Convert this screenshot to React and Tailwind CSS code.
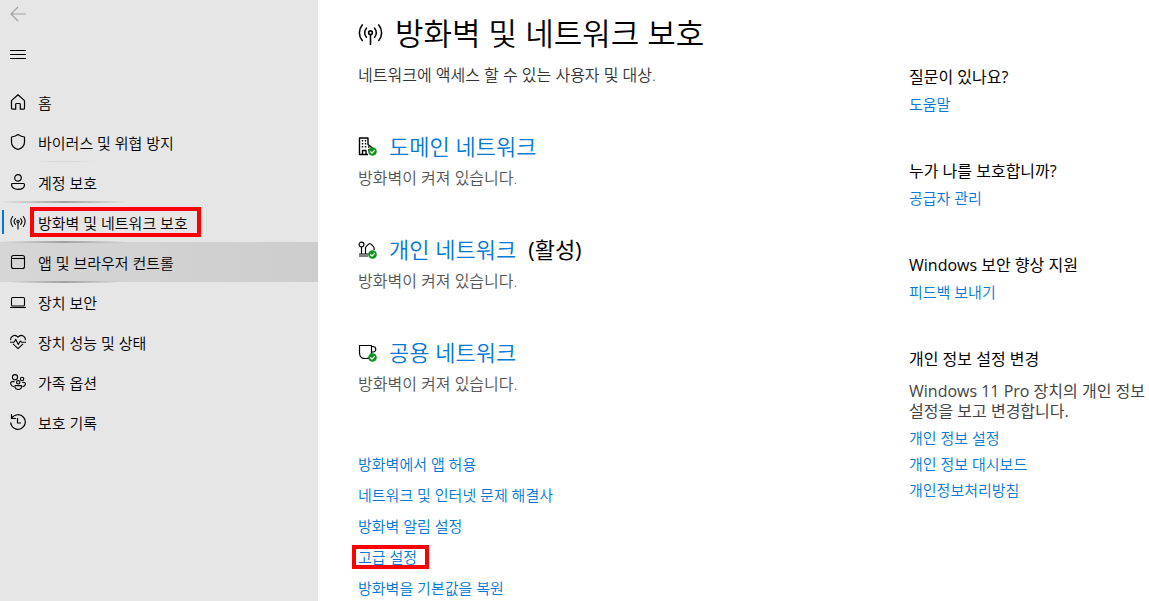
import clsx from "clsx";

function Glyph({ className = "size-4", children, ...props }) {
  return (
    <svg
      viewBox="0 0 16 16"
      fill="none"
      stroke="currentColor"
      strokeLinejoin="round"
      className={clsx("shrink-0", className)}
      aria-hidden="true"
      {...props}
    >
      {children}
    </svg>
  );
}

function BackIcon() {
  return (
    <Glyph strokeWidth="1.2">
      <path d="M16 8H1M8 1 1 8l7 7" />
    </Glyph>
  );
}

function MenuIcon() {
  return (
    <Glyph>
      <path d="M0 4.5h16M0 8.5h16M0 12.5h16" />
    </Glyph>
  );
}

function HomeIcon() {
  return (
    <Glyph strokeWidth="1.2">
      <path d="M1.5 6.6 8 .8l6.5 5.8v7.6a1 1 0 0 1-1 1h-3.2v-4.9a.8.8 0 0 0-.8-.8h-3a.8.8 0 0 0-.8.8v4.9H2.5a1 1 0 0 1-1-1z" />
    </Glyph>
  );
}

function ShieldIcon() {
  return (
    <Glyph strokeWidth="1.2">
      <path d="M8 .6C6 2 4 2.9 1.5 3v5c0 4 2.6 6.2 6.5 7.5 3.9-1.3 6.5-3.5 6.5-7.5V3C12 2.9 10 2 8 .6z" />
    </Glyph>
  );
}

function AccountIcon() {
  return (
    <Glyph strokeWidth="1.2">
      <circle cx="8" cy="3.9" r="3.3" />
      <path d="M2.5 9.5h11a1 1 0 0 1 1 1c0 3-2.5 4.9-6.5 4.9s-6.5-1.9-6.5-4.9a1 1 0 0 1 1-1z" />
    </Glyph>
  );
}

function AntennaIcon({ className, strokeWidth = 1.1 }) {
  return (
    <Glyph className={className} strokeWidth={strokeWidth} strokeLinecap="round">
      <circle cx="8" cy="7.5" r="1.2" />
      <path d="M8 8.7V15M5.4 4.6a4.3 4.3 0 0 0 0 5.8M10.6 4.6a4.3 4.3 0 0 1 0 5.8M2.7 2.5a7.8 7.8 0 0 0 0 10M13.3 2.5a7.8 7.8 0 0 1 0 10" />
    </Glyph>
  );
}

function WindowIcon() {
  return (
    <Glyph strokeWidth="1.1">
      <rect x="1.5" y="1.5" width="13" height="13" rx="2" />
      <path d="M1.5 4.5h13" />
    </Glyph>
  );
}

function LaptopIcon() {
  return (
    <Glyph strokeWidth="1.1">
      <rect x="1.5" y="3.5" width="13" height="8.5" rx="1.3" />
      <path d="M0 13.5h16" />
    </Glyph>
  );
}

function HeartIcon() {
  return (
    <Glyph strokeWidth="1.1">
      <path d="M.8 6.2C-.2 2.5 4.8-.6 8 3.2c3.2-3.8 8.2-.7 7.2 3M3 9.8l5 4.9 5-4.9" />
      <path d="M0 8.2h4l1.8-2.8 2.5 5.1 2-3.5 1.2 1.2H16" />
    </Glyph>
  );
}

function FamilyIcon() {
  return (
    <Glyph strokeWidth="1.1">
      <circle cx="5" cy="3.2" r="2.6" />
      <circle cx="12.1" cy="5" r="1.7" />
      <circle cx="8.2" cy="8.3" r="1.7" />
      <path d="M4.5 7.6H2c-2.2.3-1.7 4.9 2 5.2M12.2 8.5h2.3c1.6.8.9 3.8-1.8 4.2M5.3 11.6h6c.9 0 .7 3.9-3 3.9s-3.9-3.9-3-3.9z" />
    </Glyph>
  );
}

function HistoryIcon() {
  return (
    <Glyph strokeWidth="1.2">
      <path d="M1.5 0v4.5H6M1.7 4.3A7.3 7.3 0 1 1 .7 8.5M7.5 4v5H11" />
    </Glyph>
  );
}

function CheckBadge() {
  return (
    <>
      <circle cx="14.5" cy="14.5" r="4.3" fill="#10931e" stroke="none" />
      <path d="m12.3 14.5 1.7 1.6 2.8-3" stroke="#fff" strokeWidth="1.3" />
    </>
  );
}

function DomainIcon() {
  return (
    <Glyph className="size-[19px]" viewBox="0 0 19 19" strokeWidth="1.4">
      <path d="M10 17.5H1.5V1H10v6.5l4.5 3.5v3M4.5 17v-3.5H8V17" />
      <path d="M3.8 3.8h1.4M6.8 3.8h1.4M3.8 6.8h1.4M6.8 6.8h1.4M3.8 9.8h1.4M6.8 9.8h1.4M10 10h1.5M10 13h1.5" />
      <CheckBadge />
    </Glyph>
  );
}

function PrivateIcon() {
  return (
    <Glyph className="size-[19px]" viewBox="0 0 19 19" strokeWidth="1.2">
      <circle cx="3.5" cy="4.5" r="2.4" />
      <path d="M3.5 7v7M1 14h10M1 16h9M7.5 14V7.8c0-.6 3.3-4.3 4.3-4.3s4.3 3.7 4.3 4.3V10" />
      <CheckBadge />
    </Glyph>
  );
}

function PublicIcon() {
  return (
    <Glyph className="size-[19px]" viewBox="0 0 19 19" strokeWidth="1.2">
      <path d="M1.5 2.5h12v7c0 4-2 6-5 6h-2c-3 0-5-2-5-6zM13.5 3.5h1.3c4 0 3.8 5.500.3 5.500h-1.600" />
      <CheckBadge />
    </Glyph>
  );
}

const NAV_ITEMS = [
  { label: "홈", icon: HomeIcon },
  { label: "바이러스 및 위협 방지", icon: ShieldIcon },
  { label: "계정 보호", icon: AccountIcon, edge: "left-8 w-16 h-px via-neutral-300" },
  {
    label: "방화벽 및 네트워크 보호",
    icon: AntennaIcon,
    edge: "left-0 w-32 h-0.5 via-neutral-400",
    active: true,
  },
  {
    label: "앱 및 브라우저 컨트롤",
    icon: WindowIcon,
    edge: "left-0 w-32 h-0.5 via-neutral-400",
    hovered: true,
  },
  { label: "장치 보안", icon: LaptopIcon, edge: "left-2 w-28 h-0.5 via-neutral-400" },
  { label: "장치 성능 및 상태", icon: HeartIcon },
  { label: "가족 옵션", icon: FamilyIcon },
  { label: "보호 기록", icon: HistoryIcon },
];

const NETWORKS = [
  { name: "도메인 네트워크", icon: DomainIcon },
  { name: "개인 네트워크", icon: PrivateIcon, note: "(활성)" },
  { name: "공용 네트워크", icon: PublicIcon },
];

const ACTIONS = [
  { label: "방화벽에서 앱 허용" },
  { label: "네트워크 및 인터넷 문제 해결사" },
  { label: "방화벽 알림 설정" },
  { label: "고급 설정", marked: true },
  { label: "방화벽을 기본값을 복원" },
];

const HELP = [
  { title: "질문이 있나요?", links: ["도움말"] },
  { title: "누가 나를 보호합니까?", links: ["공급자 관리"] },
  { title: "Windows 보안 향상 지원", links: ["피드백 보내기"] },
  {
    title: "개인 정보 설정 변경",
    body: "Windows 11 Pro 장치의 개인 정보 설정을 보고 변경합니다.",
    links: ["개인 정보 설정", "개인 정보 대시보드", "개인정보처리방침"],
  },
];

function Marker({ className }) {
  return (
    <span
      className={clsx("pointer-events-none absolute border-4 border-[#ff0000]", className)}
      aria-hidden="true"
    />
  );
}

function NavItem({ label, icon: Icon, edge, active, hovered }) {
  return (
    <li>
      <a
        href="#"
        aria-current={active ? "page" : undefined}
        className={clsx(
          "relative flex h-10 items-center gap-3 pl-2.5",
          hovered && "bg-linear-to-r from-[#d6d6d6] to-[#cdcdcd]"
        )}
      >
        {edge && (
          <span
            className={clsx(
              "absolute -top-px bg-linear-to-r from-transparent to-transparent",
              edge
            )}
          />
        )}
        {active && <span className="absolute left-0.5 h-6 w-0.5 bg-[#0078d7]" />}
        <Icon />
        <span className="relative pt-0.5 leading-5">
          {label}
          {active && <Marker className="-top-1 -left-2 h-[30px] w-[171px]" />}
        </span>
      </a>
    </li>
  );
}

function Sidebar() {
  return (
    <nav className="w-[318px] shrink-0 bg-[#e6e6e6] text-[15px]">
      <button
        type="button"
        aria-label="뒤로"
        className="flex h-7 items-center pl-2.5 text-neutral-400"
      >
        <BackIcon />
      </button>
      <button
        type="button"
        aria-label="메뉴"
        className="mt-1.5 mb-2 flex h-10 items-center pl-2.5"
      >
        <MenuIcon />
      </button>
      <ul>
        {NAV_ITEMS.map((item) => (
          <NavItem key={item.label} {...item} />
        ))}
      </ul>
    </nav>
  );
}

export default function App() {
  return (
    <div className="flex min-h-screen bg-white font-['Open_Sans','Noto_Sans_CJK_KR',sans-serif] font-[350] text-black">
      <Sidebar />

      <main className="min-w-0 flex-1 pt-[13px] pl-10">
        <h1 className="flex items-center gap-3 text-[31px] leading-10">
          <AntennaIcon className="size-[25px]" strokeWidth={1} />
          방화벽 및 네트워크 보호
        </h1>
        <p className="mt-3 leading-5 text-[#333333]">
          네트워크에 액세스 할 수 있는 사용자 및 대상.
        </p>

        <div className="mt-[45px] flex flex-col gap-[45px]">
          {NETWORKS.map(({ name, icon: Icon, note }) => (
            <section key={name}>
              <h2 className="flex items-center gap-3 text-[22px] leading-8">
                <Icon />
                <a href="#" className="text-[#0078d7]">
                  {name}
                </a>
                {note && <span className="font-normal">{note}</span>}
              </h2>
              <p className="mt-1.5 leading-5 text-[#555555]">방화벽이 켜져 있습니다.</p>
            </section>
          ))}
        </div>

        <ul className="mt-[60px] flex flex-col gap-[11px] text-[15px] leading-5 text-[#0078d7]">
          {ACTIONS.map(({ label, marked }) => (
            <li key={label}>
              <a href="#" className="relative inline-block">
                {label}
                {marked && <Marker className="-top-0.5 -left-1.5 h-6 w-[77px]" />}
              </a>
            </li>
          ))}
        </ul>
      </main>

      <aside className="flex w-60 shrink-0 flex-col gap-[45px] pt-[65px]">
        {HELP.map(({ title, body, links }) => (
          <section key={title}>
            <h3 className="font-normal leading-6">{title}</h3>
            {body && (
              <p className="mt-2.5 mb-[7px] font-normal leading-5 text-[#444444]">{body}</p>
            )}
            <ul className="mt-[5px] flex flex-col gap-1.5 text-[15px] leading-5 text-[#0078d7]">
              {links.map((link) => (
                <li key={link}>
                  <a href="#">{link}</a>
                </li>
              ))}
            </ul>
          </section>
        ))}
      </aside>
    </div>
  );
}
